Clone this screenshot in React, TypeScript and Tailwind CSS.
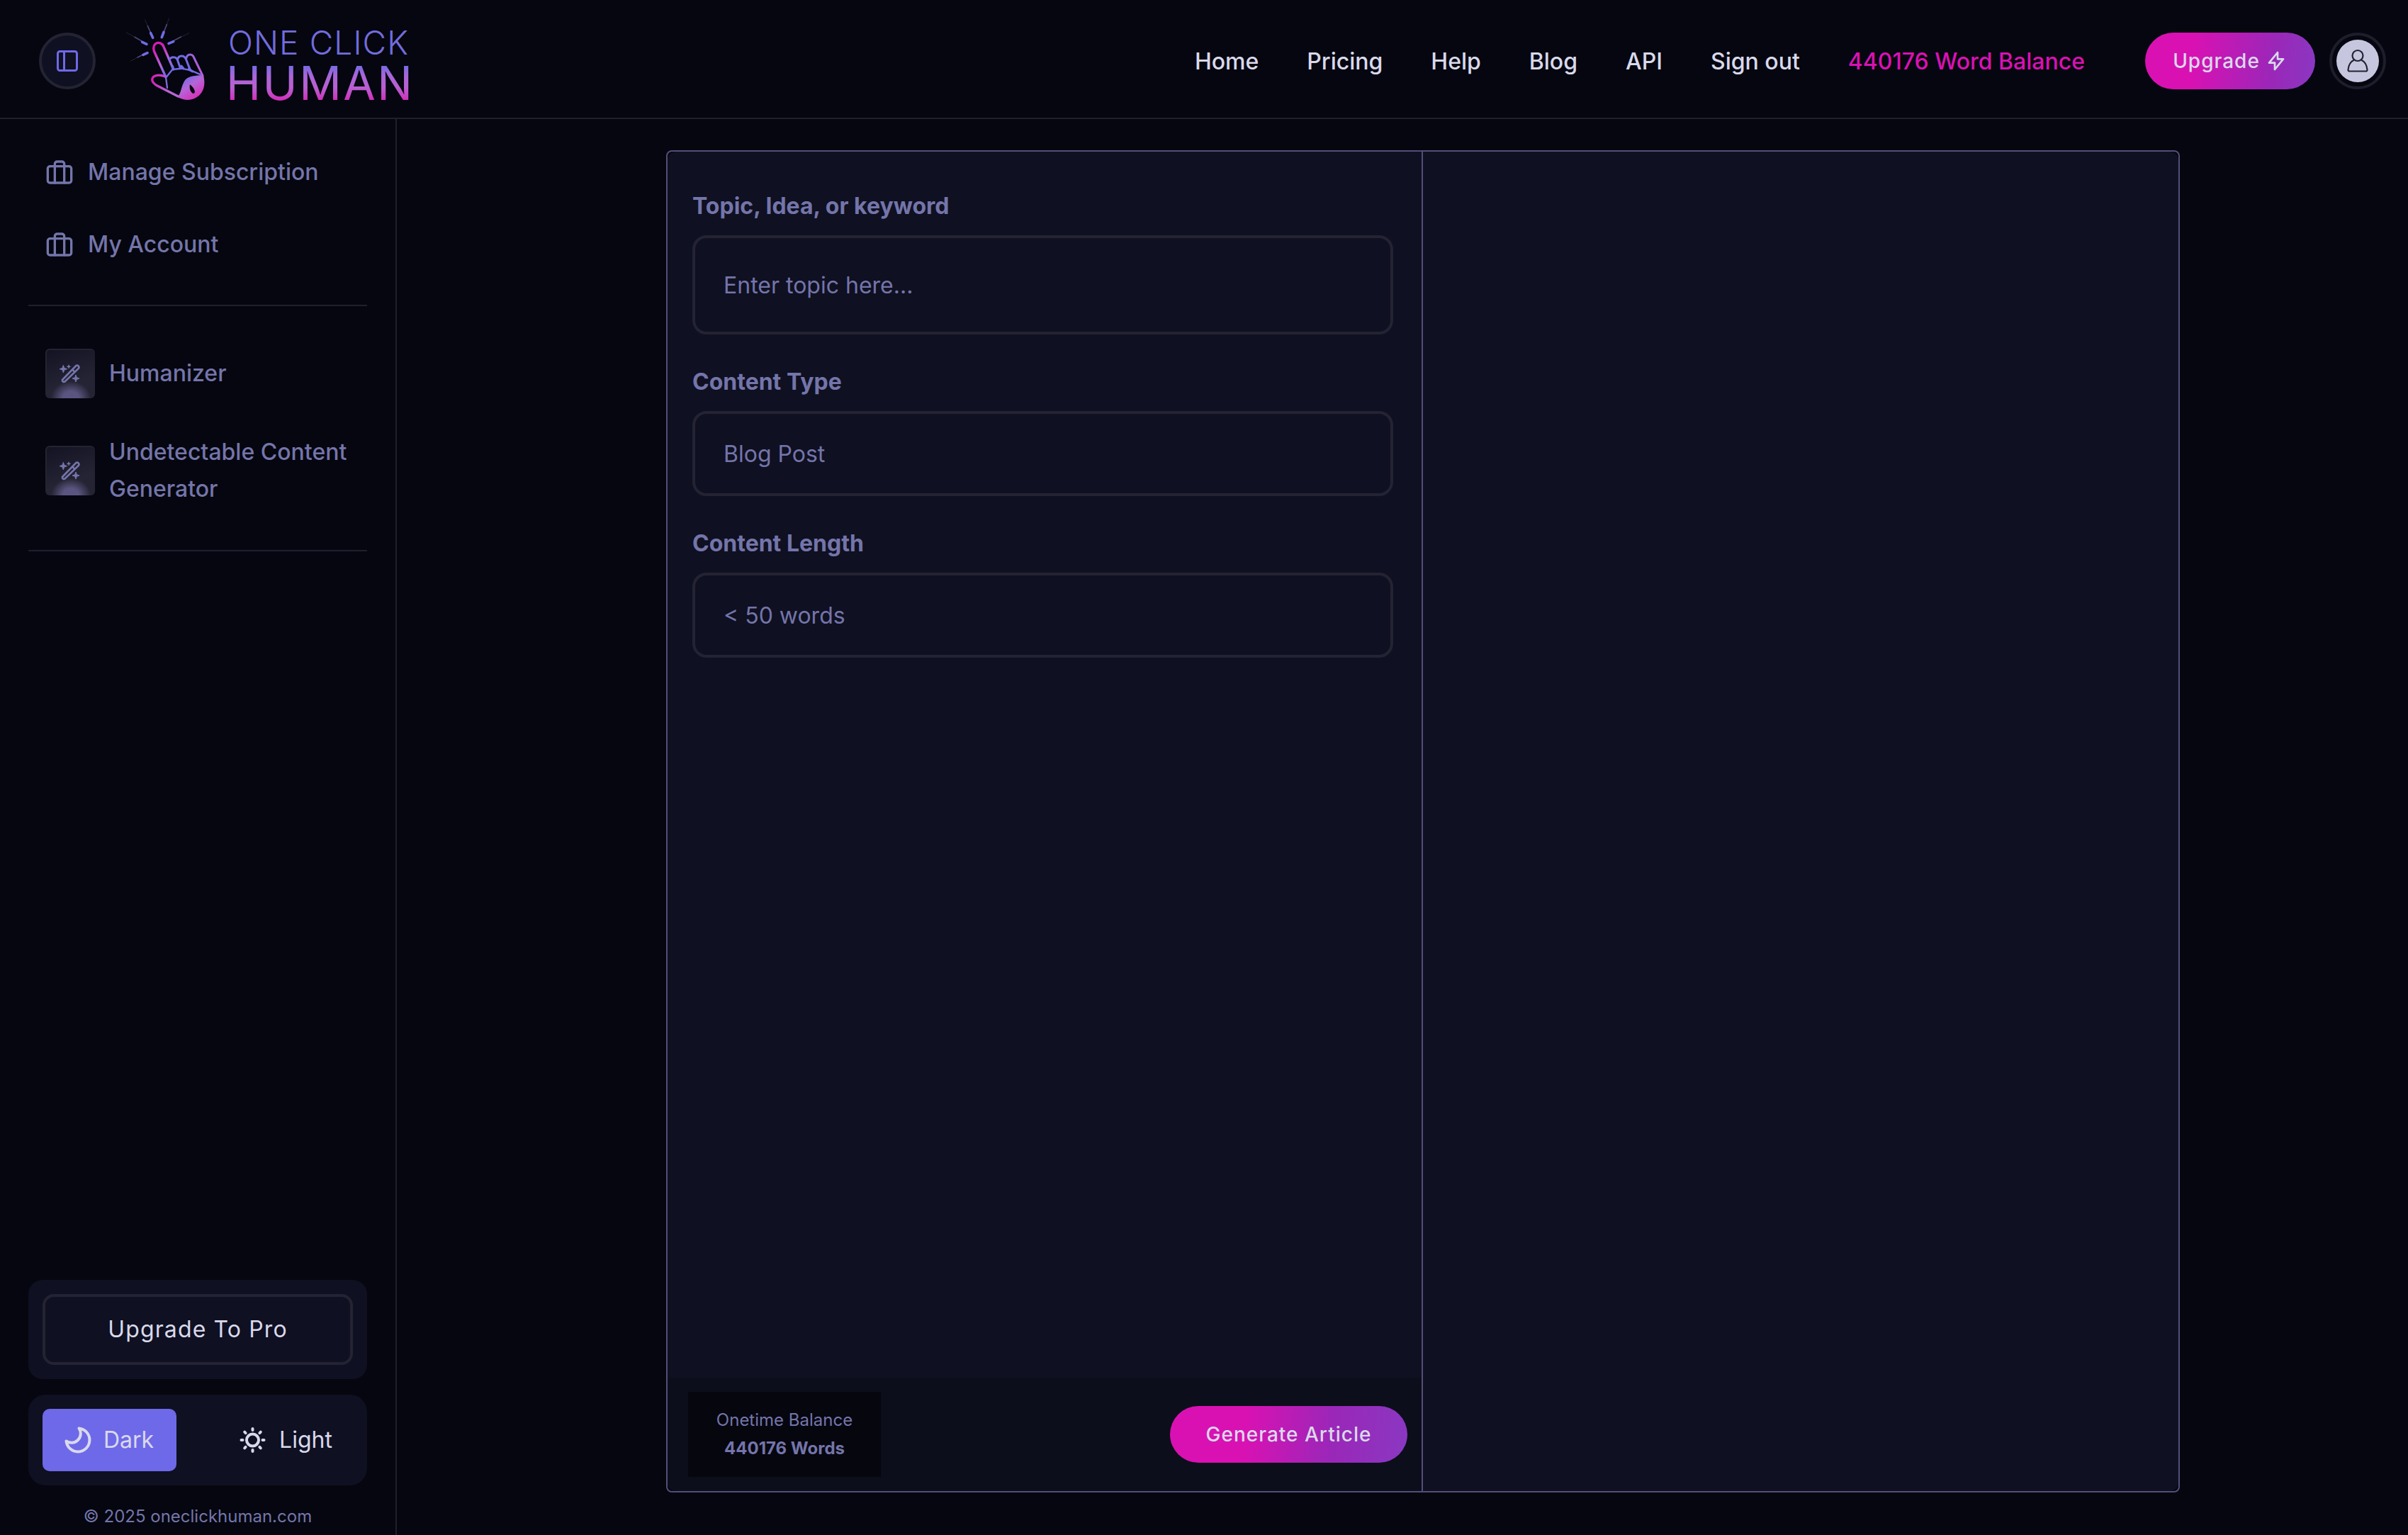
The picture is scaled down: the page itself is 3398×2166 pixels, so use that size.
import type { ReactNode } from 'react';

const NAV_LINKS = ['Home', 'Pricing', 'Help', 'Blog', 'API', 'Sign out'];

const RAYS = [0, 45, 90, 135, 180, 225, 270, 315];

const Logo = () => (
  <svg viewBox="174 20 406 130" className="w-[406px] h-[130px] ml-[39px] mt-1 shrink-0 overflow-visible" fill="none">
    <defs>
      <linearGradient id="human" x1="0" y1="92" x2="0" y2="141" gradientUnits="userSpaceOnUse">
        <stop offset="0" stopColor="#726be6" />
        <stop offset="0.3" stopColor="#a866d8" />
        <stop offset="0.65" stopColor="#b95fd2" />
        <stop offset="1" stopColor="#d030bc" />
      </linearGradient>
      <linearGradient id="finger" x1="530" y1="180" x2="600" y2="270" gradientUnits="userSpaceOnUse">
        <stop offset="0" stopColor="#d61bb6" />
        <stop offset="0.6" stopColor="#b565d6" />
        <stop offset="1" stopColor="#726be6" />
      </linearGradient>
      <linearGradient id="knuckle" x1="600" y1="0" x2="740" y2="0" gradientUnits="userSpaceOnUse">
        <stop offset="0.3" stopColor="#726be6" />
        <stop offset="1" stopColor="#c05ad2" />
      </linearGradient>
      <linearGradient id="palm" x1="665" y1="300" x2="720" y2="380" gradientUnits="userSpaceOnUse">
        <stop offset="0" stopColor="#7a6be4" />
        <stop offset="0.4" stopColor="#b565d6" />
        <stop offset="1" stopColor="#d62fba" />
      </linearGradient>
      <linearGradient id="thumb" x1="520" y1="300" x2="600" y2="320" gradientUnits="userSpaceOnUse">
        <stop offset="0" stopColor="#d61bb6" />
        <stop offset="1" stopColor="#b565d6" />
      </linearGradient>
    </defs>
    <g transform="translate(40 10) scale(0.33333)" strokeLinecap="round" strokeLinejoin="round">
      {/* rays: faint tips, then the bright inner ends */}
      <path d="M494 54l22 50M596 48l-20 50M416 108l64 36M680 110l-68 34M434 228l54-28" stroke="#252439" strokeWidth="3" />
      <path d="M505 80l11 24M586 74l-10 26M450 127l30 17M646 126l-34 18M462 213l26-13" stroke="#4a4873" strokeWidth="5" />
      <path d="M518 110l9 20M573 106l-8 22M482 148l19 9M594 154l20-8M486 202l18-8" stroke="#726be6" strokeWidth="11" />
      <path d="M582 296L532 186C522 146 562 142 572 166L612 258" stroke="url(#finger)" strokeWidth="10" />
      <path d="M598 224c4-16 30-16 34 2l12 34M632 222c4-20 28-20 36 0l18 46" stroke="#726be6" strokeWidth="9" />
      <path d="M668 218c6-24 28-20 34-2l36 74" stroke="url(#knuckle)" strokeWidth="9" />
      <path d="M586 294l24-30 40-4 38 8 42 18" stroke="#726be6" strokeWidth="7" />
      <path d="M610 250l4 14M648 250l8 10M680 262l14 10" stroke="#726be6" strokeWidth="10" />
      <path d="M582 296l6 46" stroke="#8169d8" strokeWidth="7" />
      <path d="M580 294c-26-10-50-6-55 8-4 12 4 20 15 28l94 48" stroke="url(#thumb)" strokeWidth="10" />
      <path
        fill="url(#palm)"
        d="M632 380c18-20 14-50 34-74 14-14 38-16 75-18 7 28 6 54-8 74-20 30-66 42-101 18z M684 328c-4 16 4 36 14 38 12 0 8-22-14-38z"
        fillRule="evenodd"
      />
    </g>
    <text x="322" y="77" textLength="254" fontFamily="Inter, sans-serif" fontWeight="300" fontSize="46" fill="#736cdd">
      ONE CLICK
    </text>
    <text x="319" y="141" textLength="263" fontFamily="Inter, sans-serif" fontWeight="400" fontSize="66" fill="url(#human)">
      HUMAN
    </text>
  </svg>
);

const BriefcaseIcon = () => (
  <svg viewBox="0 0 24 24" className="size-10 shrink-0" fill="none" stroke="currentColor" strokeWidth="2" strokeLinecap="round" strokeLinejoin="round">
    <rect x="2" y="7" width="20" height="14" rx="2" />
    <path d="M16 21V5a2 2 0 0 0-2-2h-4a2 2 0 0 0-2 2v16" />
  </svg>
);

const WandTile = () => (
  <div className="size-[70px] shrink-0 rounded-[6px] overflow-hidden border-t-2 border-l-2 border-[#242333] bg-[radial-gradient(ellipse_28px_24px_at_50%_100%,#5a5580_40%,transparent_100%),linear-gradient(160deg,#141323_0%,#252434_65%)]">
    <svg viewBox="48 42 204 204" className="size-[68px]" fill="#7475aa">
      <path d="M114 168L172 108a8 8 0 0 1 11 11L124 176a7 7 0 0 1-10-8zM156 124l12 12" fill="none" stroke="#7475aa" strokeWidth="8" />
      <path d="M118 106l4 12 12 4-12 4-4 12-4-12-12-4 12-4z" stroke="#7475aa" strokeWidth="3" />
      <path d="M141 102l3 7 7 3-7 3-3 7-3-7-7-3 7-3z" />
      <path d="M171 147l4 11 11 4-11 4-4 11-4-11-11-4 11-4z" stroke="#7475aa" strokeWidth="3" />
    </svg>
  </div>
);

const AccountLink = ({ label }: { label: string }) => (
  <a className="flex items-center gap-5 h-[102px] pl-6">
    <BriefcaseIcon />
    <span>{label}</span>
  </a>
);

const ToolLink = ({ children }: { children: ReactNode }) => (
  <a className="flex items-center gap-5 pl-6 leading-[52px]">
    <WandTile />
    <span className="w-[360px]">{children}</span>
  </a>
);

const Header = () => (
  <header className="h-[168px] shrink-0 border-b-2 border-[#201f2e] flex items-center">
    <button className="ml-[55px] mt-[6px] size-20 shrink-0 rounded-full border-4 border-[#242333] bg-[#0f1021] flex items-center justify-center">
      <svg viewBox="0 0 30 30" className="size-[30px]" fill="none" stroke="#6e69e8" strokeWidth="3">
        <rect x="1.5" y="1.5" width="27" height="27" rx="3" />
        <path d="M10.5 1.5v27" />
      </svg>
    </button>
    <Logo />
    <nav className="ml-auto flex items-center gap-[68px] mt-[8px] mr-[85px] font-medium text-[#d9d9ec]">
      {NAV_LINKS.map((link) => (
        <a key={link} className="whitespace-nowrap">{link}</a>
      ))}
      <span className="whitespace-nowrap text-[#d911b3]">440176 Word Balance</span>
    </nav>
    <button className="mt-[6px] w-[240px] h-20 shrink-0 rounded-full bg-[linear-gradient(95deg,#d911b3_28%,#9a27b8_75%,#8a38c2_100%)] text-[#d9d9ec] text-[28px] font-medium tracking-[1px] flex items-center justify-center gap-[7px]">
      Upgrade
      <svg viewBox="0 0 24 24" className="size-8" fill="none" stroke="currentColor" strokeWidth="2" strokeLinecap="round" strokeLinejoin="round">
        <path d="M13.500 3v7h6l-9 11v-7H4.500l9-11" />
      </svg>
    </button>
    <div className="mt-[6px] ml-5 mr-[31px] size-20 shrink-0 rounded-full border-4 border-[#1e1d2c] flex items-center justify-center">
      <div className="size-[60px] rounded-full bg-[#c6c6df] flex items-center justify-center">
        <svg viewBox="0 0 32 34" className="w-8 h-[34px]" fill="none" stroke="#242333" strokeWidth="2.2" strokeLinejoin="round">
          <circle cx="16" cy="9.5" r="7.5" />
          <path d="M11 15.500C6 18 3 23 2.500 29.500q0 2 2 2h23q2 0 2-2C29 23 26 18 21 15.500" />
        </svg>
      </div>
    </div>
  </header>
);

const Sidebar = () => (
  <aside className="w-[560px] shrink-0 border-r-2 border-[#201f2e] px-10 flex flex-col font-medium text-[#7475aa]">
    <div className="mt-6 mb-[34px]">
      <AccountLink label="Manage Subscription" />
      <AccountLink label="My Account" />
    </div>
    <div className="h-[348px] border-y-2 border-[#201f2e] flex flex-col pt-[60px] gap-[50px]">
      <ToolLink>Humanizer</ToolLink>
      <ToolLink>Undetectable Content Generator</ToolLink>
    </div>

    <div className="mt-auto h-[140px] rounded-[20px] bg-[#0f1021] p-5">
      <button className="w-full h-full rounded-[16px] border-4 border-[#242333] font-normal text-[#d9d9ec] tracking-[1.12px]">
        Upgrade To Pro
      </button>
    </div>
    <div className="mt-[22px] h-32 rounded-[24px] bg-[#0f1021] p-5 flex justify-between font-normal text-[#d9d9ec]">
      <button className="w-[189px] rounded-[10px] bg-[#6e69e8] flex items-center justify-center gap-4">
        <svg viewBox="0 0 40 40" className="size-10 -ml-0.5" fill="none" stroke="currentColor" strokeWidth="4" strokeLinejoin="round">
          <path d="M21.500 3.500A16.500 16.500 0 1 1 3.500 21.500C8 24.500 15 25 20 20C25 15 24.500 8 21.500 3.500Z" />
        </svg>
        Dark
      </button>
      <button className="w-[189px] flex items-center justify-center gap-4">
        <svg viewBox="0 0 40 40" className="size-10" fill="none" stroke="currentColor" strokeWidth="4" strokeLinecap="round">
          <circle cx="18.500" cy="20" r="8.500" />
          {RAYS.map((angle) => (
            <path key={angle} d="M18.500 4v2" transform={`rotate(${angle} 18.5 20)`} />
          ))}
        </svg>
        Light
      </button>
    </div>
    <p className="mt-[21px] mb-[4px] leading-[45px] text-center text-2xl font-normal">© 2025 oneclickhuman.com</p>
  </aside>
);

const Field = ({ label, value, tall }: { label: string; value: string; tall?: boolean }) => (
  <div className="mb-[42px]">
    <div className="mb-[17px] pt-px leading-[48px] font-bold">{label}</div>
    <div className={`w-[989px] rounded-[20px] border-4 border-[#242333] pl-10 pt-px flex items-center ${tall ? 'h-[140px]' : 'h-[120px]'}`}>
      {value}
    </div>
  </div>
);

const Editor = () => (
  <main className="flex-1 pt-11 pl-[380px]">
    <div className="w-[2136px] h-[1894px] rounded-[8px] border-2 border-[#534e78] flex text-[#7475aa]">
      <section className="w-[1064px] rounded-l-[12px] overflow-hidden bg-[#0f1021] flex flex-col">
        <div className="flex-1 pt-[52px] pl-[35px]">
          <Field label="Topic, Idea, or keyword" value="Enter topic here..." tall />
          <Field label="Content Type" value="Blog Post" />
          <Field label="Content Length" value="< 50 words" />
        </div>
        <div className="h-[160px] bg-[#0c0e1b] flex items-center justify-between pl-[29px] pr-5">
          <div className="w-[272px] h-[120px] bg-[#06060f] flex flex-col items-center justify-center text-2xl leading-10">
            <span>Onetime Balance</span>
            <span className="font-bold">440176 Words</span>
          </div>
          <button className="w-[335px] h-20 rounded-full bg-[linear-gradient(95deg,#d911b3_32%,#9a27b8_68%,#8a38c2_100%)] text-[#d9d9ec] text-[28px] font-medium tracking-[1px]">
            Generate Article
          </button>
        </div>
      </section>
      <section className="flex-1 border-l-2 border-[#534e78] rounded-r-[12px] bg-[#0f1021]" />
    </div>
  </main>
);

export default function App() {
  return (
    <div className="w-[3398px] h-[2166px] overflow-hidden bg-[#05060f] flex flex-col font-['Inter',sans-serif] text-[32px] leading-[48px]">
      <Header />
      <div className="flex-1 min-h-0 flex">
        <Sidebar />
        <Editor />
      </div>
    </div>
  );
}
